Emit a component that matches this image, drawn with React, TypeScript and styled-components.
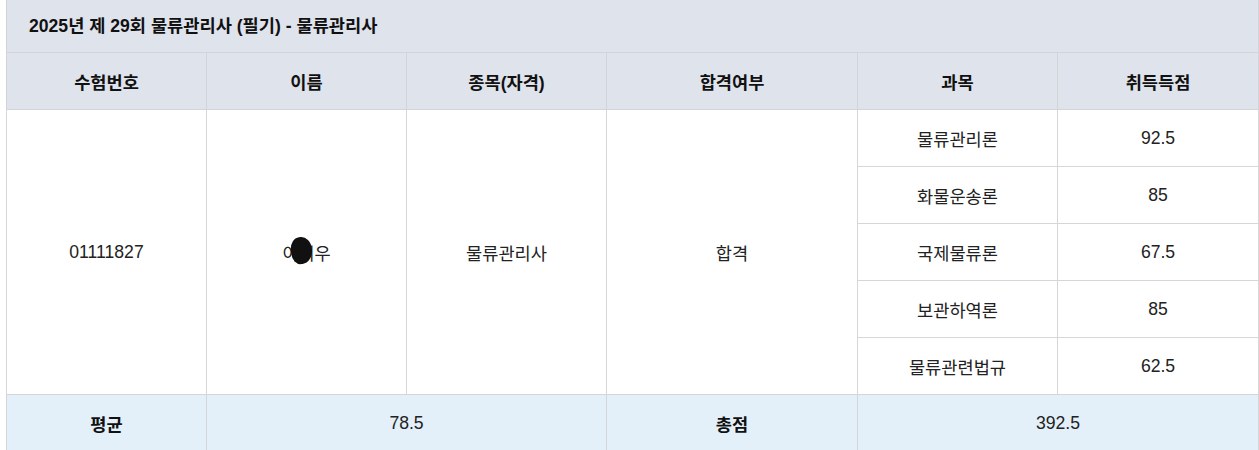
import React from "react";
import styled, { createGlobalStyle } from "styled-components";

const subjects = [
  { name: "물류관리론", score: "92.5" },
  { name: "화물운송론", score: "85" },
  { name: "국제물류론", score: "67.5" },
  { name: "보관하역론", score: "85" },
  { name: "물류관련법규", score: "62.5" },
];

export default function App() {
  return (
    <>
      <GlobalStyle />
      <Page>
        <Table>
          <colgroup>
            <col style={{ width: 200 }} />
            <col style={{ width: 200 }} />
            <col style={{ width: 200 }} />
            <col style={{ width: 251 }} />
            <col style={{ width: 200 }} />
            <col style={{ width: 201 }} />
          </colgroup>
          <thead>
            <tr>
              <TitleCell colSpan={6}>2025년 제 29회 물류관리사 (필기) - 물류관리사</TitleCell>
            </tr>
            <tr>
              <HeadCell>수험번호</HeadCell>
              <HeadCell>이름</HeadCell>
              <HeadCell>종목(자격)</HeadCell>
              <HeadCell>합격여부</HeadCell>
              <HeadCell>과목</HeadCell>
              <HeadCell>취득득점</HeadCell>
            </tr>
          </thead>
          <tbody>
            {subjects.map(({ name, score }, i) => (
              <tr key={name}>
                {i === 0 && (
                  <>
                    <Cell rowSpan={5}>01111827</Cell>
                    <Cell rowSpan={5}>
                      <Name>
                        이지우
                        <Blot />
                      </Name>
                    </Cell>
                    <Cell rowSpan={5}>물류관리사</Cell>
                    <Cell rowSpan={5}>합격</Cell>
                  </>
                )}
                <Cell>{name}</Cell>
                <Cell>{score}</Cell>
              </tr>
            ))}
          </tbody>
          <tfoot>
            <tr>
              <FootHead>평균</FootHead>
              <FootCell colSpan={2}>78.5</FootCell>
              <FootHead>총점</FootHead>
              <FootCell colSpan={2}>392.5</FootCell>
            </tr>
          </tfoot>
        </Table>
      </Page>
    </>
  );
}

const GlobalStyle = createGlobalStyle`
  body {
    margin: 0;
    background: #fff;
    font-family: "Liberation Sans", "Noto Sans CJK KR", sans-serif;
  }
`;

const Page = styled.div`
  padding: 0 0 0 6px;
`;

const Table = styled.table`
  width: 1252px;
  border-collapse: collapse;
  table-layout: fixed;
  font-size: 17.6px;
  color: #222;
`;

const TitleCell = styled.th`
  height: 49px;
  padding: 0 0 3px 22px;
  text-align: left;
  font-weight: 700;
  color: #111;
  background: #dfe3ec;
  border: 1px solid #d2d4d8;
  border-top: none;
`;

const HeadCell = styled.th`
  height: 56px;
  padding: 0;
  font-weight: 700;
  color: #111;
  background: #dfe3ec;
  border: 1px solid #d2d4d8;
`;

const Cell = styled.td`
  height: 56px;
  padding: 0;
  text-align: center;
  border: 1px solid #d6d6d6;
`;

const Name = styled.span`
  position: relative;
  display: inline-block;
`;

const Blot = styled.span`
  position: absolute;
  left: 9px;
  top: -3px;
  width: 21px;
  height: 27px;
  border-radius: 48% 52% 55% 45%;
  background: #111;
  transform: rotate(-6deg);
`;

const FootHead = styled.td`
  height: 56px;
  padding: 0;
  text-align: center;
  font-weight: 700;
  color: #111;
  background: #e3f0fa;
  border: 1px solid #d6d6d6;
`;

const FootCell = styled(FootHead)`
  font-weight: 400;
  color: #222;
`;
